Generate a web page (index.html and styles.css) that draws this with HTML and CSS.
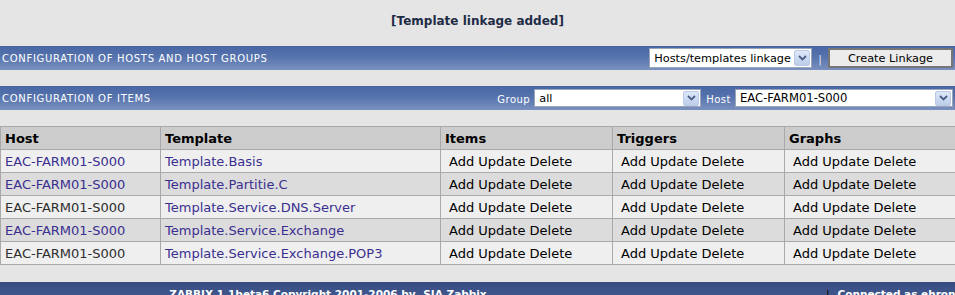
FILE: index.html
```html
<!DOCTYPE html>
<html>
<head>
<meta charset="utf-8">
<title>Zabbix - Configuration of hosts</title>
<link rel="stylesheet" href="styles.css">
</head>
<body>
<div class="msg">[Template linkage added]</div>

<div class="bar">
  <span class="bar-title">CONFIGURATION OF HOSTS AND HOST GROUPS</span>
  <div class="bar-tools">
    <div class="select sel-linkage"><span class="sel-text">Hosts/templates linkage</span><span class="arrow"><svg width="9" height="6" viewBox="0 0 9 6"><path d="M1 1 L4.5 4.5 L8 1" fill="none" stroke="#4a5f86" stroke-width="1.8"/></svg></span></div>
    <span class="sep">|</span>
    <button class="btn">Create Linkage</button>
  </div>
</div>

<div class="bar">
  <span class="bar-title">CONFIGURATION OF ITEMS</span>
  <div class="bar-tools">
    <span class="lbl">Group</span>
    <div class="select sel-group"><span class="sel-text">all</span><span class="arrow"><svg width="9" height="6" viewBox="0 0 9 6"><path d="M1 1 L4.5 4.5 L8 1" fill="none" stroke="#4a5f86" stroke-width="1.8"/></svg></span></div>
    <span class="lbl lbl-host">Host</span>
    <div class="select sel-host"><span class="sel-text">EAC-FARM01-S000</span><span class="arrow"><svg width="9" height="6" viewBox="0 0 9 6"><path d="M1 1 L4.5 4.5 L8 1" fill="none" stroke="#4a5f86" stroke-width="1.8"/></svg></span></div>
  </div>
</div>

<table class="grid">
  <colgroup>
    <col class="c-host"><col class="c-tpl"><col class="c-act"><col class="c-act"><col>
  </colgroup>
  <thead>
    <tr><th>Host</th><th>Template</th><th>Items</th><th>Triggers</th><th>Graphs</th></tr>
  </thead>
  <tbody>
    <tr class="odd"><td><a href="#">EAC-FARM01-S000</a></td><td><a href="#">Template.Basis</a></td><td class="act">Add Update Delete</td><td class="act">Add Update Delete</td><td class="act">Add Update Delete</td></tr>
    <tr class="even"><td><a href="#">EAC-FARM01-S000</a></td><td><a href="#">Template.Partitie.C</a></td><td class="act">Add Update Delete</td><td class="act">Add Update Delete</td><td class="act">Add Update Delete</td></tr>
    <tr class="odd"><td class="plain">EAC-FARM01-S000</td><td><a href="#">Template.Service.DNS.Server</a></td><td class="act">Add Update Delete</td><td class="act">Add Update Delete</td><td class="act">Add Update Delete</td></tr>
    <tr class="even"><td><a href="#">EAC-FARM01-S000</a></td><td><a href="#">Template.Service.Exchange</a></td><td class="act">Add Update Delete</td><td class="act">Add Update Delete</td><td class="act">Add Update Delete</td></tr>
    <tr class="odd"><td class="plain">EAC-FARM01-S000</td><td><a href="#">Template.Service.Exchange.POP3</a></td><td class="act">Add Update Delete</td><td class="act">Add Update Delete</td><td class="act">Add Update Delete</td></tr>
  </tbody>
</table>

<div class="footer">
  <div class="foot-left">ZABBIX 1.1beta6 Copyright 2001-2006 by <span>SIA Zabbix</span></div>
  <div class="foot-sep">|</div>
  <div class="foot-right">Connected as ehrone</div>
</div>
</body>
</html>
```

FILE: styles.css
```css
html, body {
  margin: 0;
  padding: 0;
  background: #e5e5e5;
  font-family: "DejaVu Sans", Verdana, sans-serif;
  overflow: hidden;
}

.msg {
  height: 46px;
  display: flex;
  align-items: center;
  justify-content: center;
  font-size: 12px;
  font-weight: bold;
  color: #1f2c45;
  padding-bottom: 5px;
  box-sizing: border-box;
}

.bar {
  height: 24px;
  display: flex;
  align-items: center;
  justify-content: space-between;
  background: linear-gradient(to bottom, #4866a4 0%, #5673ad 45%, #7a91bf 100%);
  margin-bottom: 16px;
}

.bar-title {
  color: #ffffff;
  font-size: 10px;
  letter-spacing: 0.7px;
  padding-left: 2px;
}

.bar-tools {
  display: flex;
  align-items: center;
  padding-right: 2px;
}

.select {
  display: flex;
  align-items: center;
  justify-content: space-between;
  background: #ffffff;
  border: 1px solid #9aa6b8;
  box-sizing: border-box;
  font-size: 11.3px;
  color: #000;
  padding: 1px 1px 1px 4px;
}

.sel-text {
  white-space: nowrap;
}

.arrow {
  width: 16px;
  height: 16px;
  box-sizing: border-box;
  border: 1px solid #b9c9e6;
  border-radius: 2px;
  background: linear-gradient(to bottom, #dde7f8, #bccdea);
  display: flex;
  align-items: center;
  justify-content: center;
}

.sel-linkage {
  width: 163px;
  height: 20px;
}

.sep {
  color: #dfe6f2;
  font-size: 11px;
  margin: 2px 6px 0 6px;
}

.btn {
  width: 125px;
  height: 20px;
  border: 2px solid #767676;
  background: #ececec;
  font-family: "DejaVu Sans", Verdana, sans-serif;
  font-size: 11.3px;
  color: #000;
  padding: 0;
}

.lbl {
  color: #ffffff;
  font-size: 10px;
  letter-spacing: 0.5px;
  margin: 3px 4px 0 0;
}

.lbl-host {
  margin-left: 5px;
}

.sel-group {
  width: 167px;
  height: 18px;
  padding-top: 0;
  padding-bottom: 0;
}

.sel-host {
  width: 218px;
  height: 18px;
  padding-top: 0;
  padding-bottom: 0;
  font-size: 11.6px;
}

.sel-group .arrow,
.sel-host .arrow {
  height: 15px;
}

.grid {
  border-collapse: collapse;
  table-layout: fixed;
  width: 100%;
  font-size: 13px;
}

.c-host { width: 160px; }
.c-tpl { width: 280px; }
.c-act { width: 172px; }

.grid th,
.grid td {
  border: 1px solid #a9a9a9;
  height: 23px;
  padding: 0 4px;
  text-align: left;
  white-space: nowrap;
  overflow: hidden;
  box-sizing: border-box;
}

.grid th:last-child,
.grid td:last-child {
  border-right: none;
}

.grid th {
  background: #cccccc;
  font-weight: bold;
  color: #000;
}

.grid tr.odd td { background: #efefef; }
.grid tr.even td { background: #dcdcdc; }

.grid a {
  color: #3a2f8f;
  text-decoration: none;
}

.grid td.plain {
  color: #2e2e2e;
}

.grid td.act {
  padding-left: 8px;
  color: #000;
}

.footer {
  margin-top: 17px;
  height: 30px;
  display: flex;
  align-items: flex-start;
  background: linear-gradient(to bottom, #374d82, #4a6299);
  color: #ffffff;
  font-size: 10.5px;
  font-weight: bold;
  padding-top: 6px;
  box-sizing: border-box;
}

.foot-left {
  width: 656px;
  flex-shrink: 0;
  text-align: center;
  white-space: nowrap;
}

.foot-left span {
  margin-left: 4px;
}

.foot-sep {
  flex-shrink: 0;
  margin-left: 170px;
  color: #000;
  font-weight: normal;
}

.foot-right {
  flex-shrink: 0;
  margin-left: 8px;
  white-space: nowrap;
}
```
